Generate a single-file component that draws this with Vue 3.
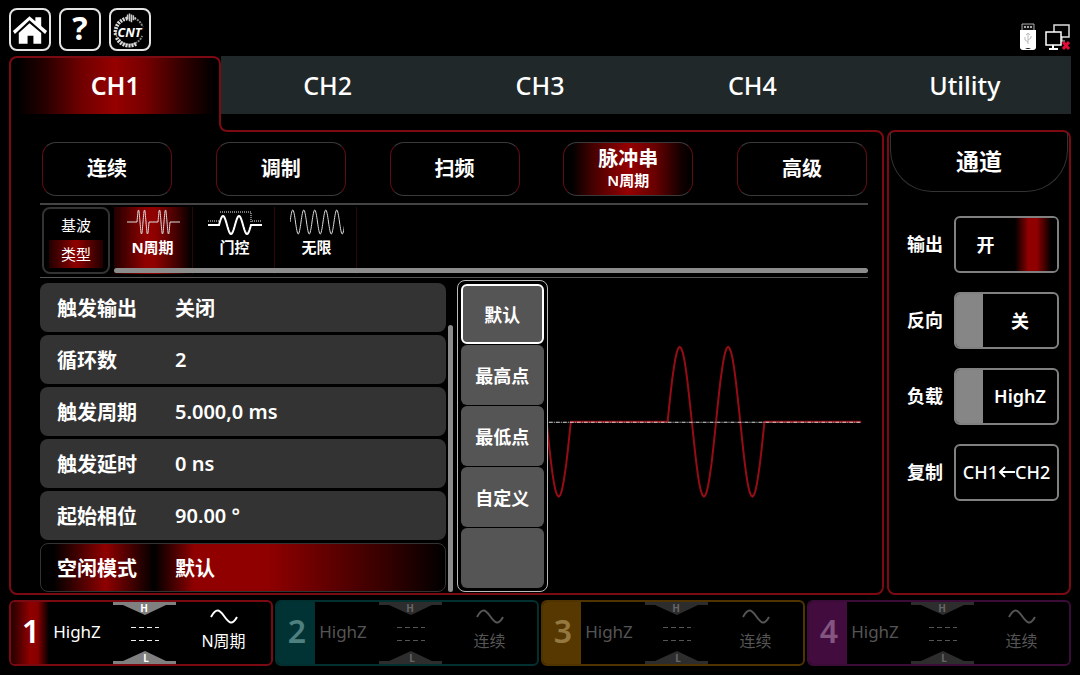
<template>
  <div class="screen">
    <header class="topbar">
      <button class="tool" aria-label="主页">
        <svg viewBox="0 0 39 39">
          <path d="M2 21 L19 6 L25 11 V7 H31 V16 L37 21 L35 24 L19 10 L4 24 Z" fill="#fff" />
          <path d="M8 23 L19 13 L31 23 V34 H23 V26 H17 V34 H8 Z" fill="#fff" />
        </svg>
      </button>
      <button class="tool help" aria-label="帮助">?</button>
      <button class="tool" aria-label="计数器">
        <svg viewBox="0 0 39 39">
          <path d="M24 8A14 14 0 0 1 33 19M5 22A14 14 0 0 0 32 26" class="dial thin" />
          <path d="M5 25A14 14 0 0 1 18 8M6 28A14 14 0 0 0 26 34" class="dial" />
          <path d="M17 4v5M19 3v8M21 4v8M23 5v5M25 7v2" stroke="#ccc" stroke-width="1.500" />
          <text x="19" y="27" text-anchor="middle" class="cnt">CNT</text>
        </svg>
      </button>
      <div class="status">
        <svg class="usb" viewBox="0 0 18 28">
          <path d="M3 7V1H15V7" fill="#111" stroke="#aaa" stroke-width="1" />
          <path d="M5 3h2v2h-2zM8 3h2v2h-2zM11 3h2v2h-2z" fill="#aaa" />
          <path d="M1 7H17V24Q17 27 14 27H4Q1 27 1 24Z" fill="#fff" />
          <path d="M9 21V10M7 12l2-2 2 2M9 19l-3-2v-3M9 17l3-2v-2" fill="none" stroke="#bbb" />
          <path d="M6 26q3-2 6 0z" fill="#111" />
        </svg>
        <svg class="lan" viewBox="0 0 26 28">
          <rect x="9" y="2" width="15" height="12" fill="#000" stroke="#ddd" stroke-width="1.500" />
          <path d="M17 14v4M14 18h6" stroke="#ddd" />
          <rect x="1" y="9" width="15" height="13" fill="#000" stroke="#fff" stroke-width="1.500" />
          <path d="M8 22v3M4 26h9" stroke="#fff" stroke-width="2" />
          <path d="M18 19l6 7M24 19l-6 7" stroke="#e00b36" stroke-width="3" />
        </svg>
      </div>
    </header>

    <nav class="tabs">
      <div v-for="t in tabs" :key="t" class="tab" :class="{ active: t === tab }">
        <button @click="tab = t">{{ t }}</button>
      </div>
    </nav>

    <main class="work">
      <section class="panel">
        <div class="modes">
          <button
            v-for="m in modes"
            :key="m.name"
            class="mode"
            :class="{ active: m.name === mode }"
            @click="mode = m.name"
          >
            {{ m.name }}
            <small v-if="m.sub">{{ m.sub }}</small>
          </button>
        </div>

        <div class="sub">
          <div class="kind">
            <button>基波</button>
            <button class="active">类型</button>
          </div>
          <div class="types">
            <button
              v-for="b in bursts"
              :key="b.name"
              class="type"
              :class="{ active: b.name === burst }"
              @click="burst = b.name"
            >
              <svg viewBox="0 0 54 28">
                <path v-if="b.gate" :d="b.gate" class="gate" />
                <path :d="b.icon" class="trace" :class="{ bold: b.gate }" />
              </svg>
              {{ b.name }}
            </button>
            <div class="hbar"></div>
          </div>
        </div>

        <div class="content">
          <div class="params">
            <button
              v-for="p in params"
              :key="p.label"
              class="param"
              :class="{ active: p.label === param }"
              @click="param = p.label"
            >
              <span class="label">{{ p.label }}</span>
              <span>{{ p.value }}</span>
            </button>
          </div>
          <div class="vbar"></div>
          <div class="scope">
            <svg viewBox="0 0 414 309" preserveAspectRatio="xMinYMin meet">
              <path :d="wave" class="wave" />
              <path d="M3 139.500H407" class="axis" />
            </svg>
            <div class="popup">
              <button
                v-for="(o, i) in options"
                :key="i"
                class="option"
                :class="{ active: o === option }"
                @click="option = o"
              >{{ o }}</button>
            </div>
          </div>
        </div>
      </section>

      <aside class="side">
        <h2>通道</h2>
        <div class="field">
          <label for="output">输出</label>
          <button id="output" class="switch on"><span>开</span><i></i></button>
        </div>
        <div class="field">
          <label for="invert">反向</label>
          <button id="invert" class="switch"><i></i><span>关</span></button>
        </div>
        <div class="field">
          <label for="load">负载</label>
          <button id="load" class="switch"><i></i><span>HighZ</span></button>
        </div>
        <div class="field">
          <label for="copy">复制</label>
          <button id="copy" class="switch copy"><span>CH1<svg class="arrow" viewBox="0 0 17 14"><path d="M17 7H2M7 2L2 7L7 12" /></svg>CH2</span></button>
        </div>
      </aside>
    </main>

    <footer class="channels">
      <button v-for="c in channels" :key="c.no" class="channel" :class="'c' + c.no">
        <b>{{ c.no }}</b>
        <span class="load">HighZ</span>
        <svg class="level" viewBox="0 0 63 62">
          <path d="M0 0H63V3H53L32 13L10 3H0Z" />
          <path d="M0 62H63V59H53L32 49L10 59H0Z" />
          <path d="M18 25.500H46M18 38.500H46" class="dash" />
          <text x="31" y="10" text-anchor="middle">H</text>
          <text x="33" y="60" text-anchor="middle">L</text>
        </svg>
        <span class="shape">
          <svg viewBox="0 0 28 16"><path d="M1 8C6 -1 9 0 14 7S22 17 27 8" /></svg>
          {{ c.mode }}
        </span>
      </button>
    </footer>
  </div>
</template>

<script setup>
import { ref } from 'vue';

const tabs = ['CH1', 'CH2', 'CH3', 'CH4', 'Utility'];
const tab = ref('CH1');

const modes = [
  { name: '连续' },
  { name: '调制' },
  { name: '扫频' },
  { name: '脉冲串', sub: 'N周期' },
  { name: '高级' },
];
const mode = ref('脉冲串');

// 正弦折线: x 起点, 中线 y, 周期, 振幅, 周期数
function sine(x, y, period, amp, cycles) {
  let d = '';
  const steps = Math.round(cycles * 32);
  for (let i = 0; i <= steps; i++) {
    const t = i / 32;
    d += `L${(x + t * period).toFixed(1)} ${(y - Math.sin(t * 2 * Math.PI) * amp).toFixed(1)}`;
  }
  return d;
}

const bursts = [
  { name: 'N周期', icon: 'M1 14' + sine(11, 14, 6, 12, 2) + sine(32, 14, 6, 12, 2) + 'L54 14' },
  {
    name: '门控',
    icon: 'M0 17H11' + sine(11, 17, 16, 9, 2) + 'L54 17',
    gate: 'M0 13H11M12 4H43V14M44 13H54',
  },
  { name: '无限', icon: 'M0 14' + sine(0, 14, 11, 12, 5) },
];
const burst = ref('N周期');

const params = [
  { label: '触发输出', value: '关闭' },
  { label: '循环数', value: '2' },
  { label: '触发周期', value: '5.000,0 ms' },
  { label: '触发延时', value: '0 ns' },
  { label: '起始相位', value: '90.00 °' },
  { label: '空闲模式', value: '默认' },
];
const param = ref('空闲模式');

const options = ['默认', '最高点', '最低点', '自定义', ''];
const option = ref('默认');

const wave = 'M3 139' + sine(19, 139, 48.5, 75, 2) + sine(213, 139, 48.5, 75, 2) + 'L407 139';

const channels = [
  { no: 1, mode: 'N周期' },
  { no: 2, mode: '连续' },
  { no: 3, mode: '连续' },
  { no: 4, mode: '连续' },
];
</script>

<style>
body {
  margin: 0;
  background: #000;
}
</style>

<style scoped>
.screen {
  min-height: 100vh;
  box-sizing: border-box;
  display: flex;
  flex-direction: column;
  padding: 8px 9px 9px;
  background: #000;
  color: #fff;
  font-family: "Noto Sans", "Noto Sans CJK SC", sans-serif;
  font-weight: 500;
}
button {
  box-sizing: border-box;
  margin: 0;
  padding: 0;
  border: none;
  background: none;
  color: inherit;
  font: inherit;
  cursor: pointer;
}
svg {
  display: block;
}

.topbar {
  display: flex;
  gap: 8px;
  margin-bottom: 5px;
}
.tool {
  width: 42px;
  height: 43px;
  border: 2px solid #e4e4e4;
  border-radius: 8px;
}
.tool svg {
  width: 38px;
  height: 39px;
}
.help {
  padding-bottom: 4px;
  font-size: 32px;
  font-weight: 700;
  line-height: 34px;
}
.dial {
  fill: none;
  stroke: #ddd;
  stroke-width: 4px;
  stroke-dasharray: 2 1;
}
.dial.thin {
  stroke: #888;
  stroke-width: 2px;
}
.cnt {
  font-size: 13px;
  font-weight: 700;
  font-style: italic;
  fill: #fff;
  stroke: #000;
  stroke-width: 3px;
  paint-order: stroke;
}
.status {
  display: flex;
  align-items: flex-end;
  gap: 8px;
  margin-left: auto;
}
.usb {
  width: 18px;
  height: 28px;
}
.lan {
  width: 26px;
  height: 28px;
}

.tabs {
  display: flex;
  height: 58px;
  background: #20282a;
}
.tab {
  position: relative;
  flex: 1;
  height: 58px;
}
.tab button {
  width: 100%;
  height: 58px;
  font-size: 25px;
}
.tab.active {
  background: #000;
}
.tab.active button {
  padding-bottom: 2px;
  border: 2px solid #7c0a12;
  border-bottom: none;
  border-radius: 8px 8px 0 0;
  background: linear-gradient(90deg, #000 3%, #200 15%, #700000 34%, #960000 50%, #780000 64%, #300 82%, #000 98%);
  font-weight: 600;
}
/* 选项卡与面板的连接边 */
.tab.active::before {
  content: "";
  position: absolute;
  z-index: 1;
  top: 58px;
  left: 0;
  right: -6px;
  height: 26px;
  border-left: 2px solid #7c0a12;
  background: #000;
}
.tab.active::after {
  content: "";
  position: absolute;
  z-index: 2;
  top: 58px;
  left: calc(100% - 2px);
  width: 10px;
  height: 16px;
  border-left: 2px solid #7c0a12;
  border-bottom: 2px solid #7c0a12;
  border-bottom-left-radius: 8px;
}

.work {
  flex: 1;
  display: flex;
  gap: 3px;
  margin-top: 16px;
}
.panel {
  flex: 1;
  padding: 10px 14px 0 29px;
  border: 2px solid #7c0a12;
  border-radius: 0 8px 8px 8px;
}
.modes {
  display: flex;
  justify-content: space-between;
  padding: 0 1px 7px 2px;
  border-bottom: 2px solid #444;
}
.mode {
  width: 130px;
  height: 54px;
  border: 1px solid #3a3a3a;
  border-left-color: #600c12;
  border-right-color: #600c12;
  border-radius: 14px;
  font-size: 20px;
  font-weight: 700;
  line-height: 24px;
}
.mode small {
  display: block;
  font-size: 15px;
  font-weight: 600;
  line-height: 18px;
}
.mode.active {
  padding-bottom: 2px;
  background: linear-gradient(90deg, #000 6%, #400 22%, #960000 50%, #600 72%, #100 92%, #000);
}

.sub {
  display: flex;
  gap: 4px;
  padding: 2px 0 3px 2px;
  border-bottom: 1px solid #555;
}
.kind {
  box-sizing: border-box;
  width: 68px;
  height: 67px;
  padding: 2px 5px 4px;
  border: 2px solid #333;
  border-radius: 8px;
  display: flex;
  flex-direction: column;
}
.kind button {
  flex: 1;
  font-size: 15px;
  font-weight: 400;
  line-height: 20px;
}
.kind .active {
  background: linear-gradient(90deg, #200, #900000 50%, #200);
}
.types {
  position: relative;
  flex: 1;
  display: flex;
  gap: 3px;
}
.type {
  display: flex;
  flex-direction: column;
  align-items: center;
  width: 79px;
  height: 67px;
  padding-right: 1px;
  border-right: 1px solid #2c0608;
  font-size: 15px;
  font-weight: 700;
  line-height: 20px;
}
.type svg {
  width: 54px;
  height: 28px;
  margin: 1px 0;
}
.type.active {
  background: linear-gradient(90deg, #200 0%, #900000 40%, #900000 52%, #400 80%, #000);
}
.trace {
  fill: none;
  stroke: #ddd;
  stroke-width: 1px;
}
.trace.bold {
  stroke: #fff;
  stroke-width: 2px;
}
.gate {
  fill: none;
  stroke: #777;
  stroke-width: 2px;
  stroke-dasharray: 1 1;
}
.hbar {
  position: absolute;
  left: 0;
  right: 0;
  bottom: 1px;
  height: 5px;
  border-radius: 3px;
  background: #8c8c8c;
}

.content {
  display: flex;
  gap: 2px;
  padding-top: 5px;
}
.params {
  flex: 0 0 49%;
  display: flex;
  flex-direction: column;
  gap: 3px;
}
.param {
  display: flex;
  align-items: center;
  height: 49px;
  padding-left: 17px;
  border-radius: 8px;
  background: #333;
  font-size: 20px;
  font-weight: 600;
}
.param.active {
  padding-left: 16px;
  border: 1px solid #333;
  background: linear-gradient(90deg, #000 3%, #900000 16%, #000 28%, #900000 38%, #900000 56%, #300 86%, #000);
}
.label {
  width: 118px;
  text-align: left;
}
.vbar {
  width: 5px;
  margin-top: 42px;
  border-radius: 3px;
  background: #8c8c8c;
}
.scope {
  position: relative;
  flex: 1;
}
.scope svg {
  width: 100%;
}
.wave {
  fill: none;
  stroke: #960c16;
  stroke-width: 2px;
}
.axis {
  stroke: #ddd;
  stroke-width: 1px;
  stroke-dasharray: 4 1 1 1;
}
.popup {
  position: absolute;
  top: -3px;
  left: 2px;
  display: flex;
  flex-direction: column;
  gap: 1px;
  padding: 3px;
  border: 1px solid #bbb;
  border-radius: 8px;
  background: #000;
}
.option {
  width: 83px;
  height: 60px;
  border-radius: 6px;
  background: #555;
  font-size: 18px;
  font-weight: 700;
}
.option.active {
  border: 2px solid #fff;
}

.side {
  box-sizing: border-box;
  width: 184px;
  border: 2px solid #7c0a12;
  border-radius: 8px;
}
.side h2 {
  margin: 0 1px 24px;
  border: 1px solid #333;
  border-top: none;
  border-radius: 0 0 42px 42px;
  font-size: 23px;
  font-weight: 700;
  line-height: 59px;
  text-align: center;
}
.field {
  display: flex;
  align-items: center;
  justify-content: flex-end;
  gap: 11px;
  margin: 0 10px 19px 0;
  font-size: 18px;
  font-weight: 600;
}
.field label {
  padding-bottom: 4px;
}
.switch {
  display: flex;
  width: 105px;
  height: 57px;
  border: 2px solid #808080;
  border-radius: 6px;
  overflow: hidden;
}
.switch span {
  flex: 1;
  display: flex;
  align-items: center;
  justify-content: center;
  align-self: center;
  padding-bottom: 2px;
}
.switch i {
  width: 27px;
  align-self: stretch;
  background: #868686;
}
.switch.on i {
  width: 42px;
  background: linear-gradient(90deg, #000, #900000 32%, #900000 52%, #000 86%);
}
.switch.copy {
  font-weight: 500;
}
.arrow {
  width: 17px;
  height: 14px;
}
.arrow path {
  fill: none;
  stroke: #fff;
  stroke-width: 2px;
}

.channels {
  display: flex;
  gap: 2px;
  margin-top: 5px;
}
.channel {
  flex: 1;
  display: flex;
  align-items: center;
  height: 66px;
  border: 2px solid #7c0a12;
  border-radius: 6px;
  overflow: hidden;
}
.channel b {
  width: 38px;
  padding: 0 0 4px 2px;
  box-sizing: border-box;
  font-size: 32px;
  font-weight: 600;
  line-height: 58px;
}
.load {
  width: 64px;
  padding: 0 8px 4px 0;
  box-sizing: border-box;
  font-size: 17px;
  font-weight: 400;
}
.level {
  width: 63px;
  height: 62px;
  fill: #808080;
}
.level text {
  fill: #fff;
  font-size: 10px;
  font-weight: 700;
}
.dash {
  stroke: #eee;
  stroke-width: 1px;
  stroke-dasharray: 5 3;
}
.shape {
  flex: 1;
  padding-bottom: 4px;
  font-size: 16px;
  font-weight: 400;
  line-height: 24px;
}
.shape svg {
  width: 28px;
  height: 16px;
  margin: 0 auto 4px;
}
.shape path {
  fill: none;
  stroke: #fff;
  stroke-width: 2px;
}
.c1 b {
  background: linear-gradient(90deg, #200, #900000 50%, #800 70%, #000);
}
.c2,
.c3,
.c4 {
  color: #555;
}
.c2 {
  border-color: #022f30;
}
.c2 b {
  background: #023334;
  color: #4f8080;
}
.c3 {
  border-color: #4f3300;
}
.c3 b {
  background: #573800;
  color: #94783f;
}
.c4 {
  border-color: #3c0c38;
}
.c4 b {
  background: #430c3f;
  color: #855582;
}
.c2 .level,
.c3 .level,
.c4 .level {
  fill: #2d2d2d;
}
.c2 text,
.c3 text,
.c4 text {
  fill: #666;
}
.c2 .dash,
.c3 .dash,
.c4 .dash,
.c2 .shape path,
.c3 .shape path,
.c4 .shape path {
  stroke: #555;
}
</style>
